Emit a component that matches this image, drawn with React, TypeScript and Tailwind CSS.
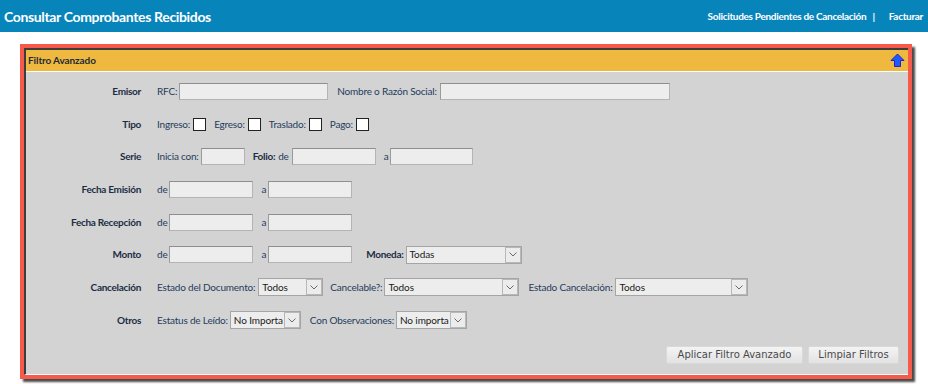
import React from "react";

const F = { fontFamily: "Lato, 'Liberation Sans', sans-serif" };

function Input({ w }: { w: string }) {
  return (
    <div
      className={`${w} h-[17px] bg-[#ededed] border border-[#b4b4b4] border-t-[#8e8e8e] border-l-[#9a9a9a]`}
    />
  );
}

function Check() {
  return <div className="w-[13px] h-[13px] bg-white border border-[#222]" />;
}

function Select({ w, value }: { w: string; value: string }) {
  return (
    <div
      className={`${w} h-[18px] bg-[#ededed] border border-[#a5a5a5] flex items-stretch`}
    >
      <div className="flex-1 flex items-center pl-[3px] text-[10px] tracking-[-0.1px] text-[#1a1a1a] overflow-hidden whitespace-nowrap">
        {value}
      </div>
      <div className="w-[16px] border border-[#b8b8b8] bg-[#ececec] flex items-center justify-center">
        <svg width="8" height="5" viewBox="0 0 8 5">
          <path d="M0.5 0.5 L4 4 L7.5 0.5" fill="none" stroke="#6a6a6a" strokeWidth="1" />
        </svg>
      </div>
    </div>
  );
}

function Row({ label, children }: { label: string; children: React.ReactNode }) {
  return (
    <div className="flex items-center h-[32.7px]">
      <div className="w-[115px] text-right font-bold text-[#1b2d45] text-[10px] tracking-[-0.3px]">
        {label}
      </div>
      <div className="ml-[16px] flex items-center text-[10px] tracking-[-0.2px] text-[#243c5c] whitespace-nowrap">
        {children}
      </div>
    </div>
  );
}

export default function App() {
  return (
    <div className="w-[928px] h-[384px] bg-white overflow-hidden" style={F}>
      <div className="h-[32px] bg-[#0785bb] flex items-center justify-between pl-[4px] pr-[5px]">
        <div className="text-white font-bold text-[14px] tracking-[-0.35px]">
          Consultar Comprobantes Recibidos
        </div>
        <div className="text-white font-bold text-[10px] tracking-[-0.3px] flex items-center">
          <span>Solicitudes Pendientes de Cancelación</span>
          <span className="ml-[6px]">|</span>
          <span className="ml-[14px]">Facturar</span>
        </div>
      </div>

      <div className="mt-[12px] ml-[20px] w-[892px] h-[335px] border-4 border-[#f65a4b] shadow-[3px_3px_2px_#4a4a4a]">
        <div className="h-full border-t-2 border-l-2 border-t-[#3c3c3c] border-l-[#3c3c3c] border-b border-b-white flex flex-col">
          <div className="h-[22px] bg-[#efb93f] flex items-center justify-between pl-[2px] pr-[3px] border-b border-white">
            <div className="text-[10px] font-bold text-[#1c2a3a] tracking-[-0.1px]">
              Filtro Avanzado
            </div>
            <svg width="15" height="15" viewBox="0 0 15 15">
              <path
                d="M7.5 1 L14 7.5 L10.5 7.5 L10.5 13.5 L4.5 13.5 L4.5 7.5 L1 7.5 Z"
                fill="#1a5cff"
                stroke="#2a1fc0"
                strokeWidth="1"
                strokeLinejoin="round"
              />
            </svg>
          </div>
          <div className="flex-1 bg-[#d3d3d3] pt-[3px] flex flex-col">
            <Row label="Emisor">
              <span>RFC:</span>
              <div className="ml-[2px]"><Input w="w-[149px]" /></div>
              <span className="ml-[9px]">Nombre o Razón Social:</span>
              <div className="ml-[3px]"><Input w="w-[230px]" /></div>
            </Row>
            <Row label="Tipo">
              <span>Ingreso:</span>
              <div className="ml-[3px]"><Check /></div>
              <span className="ml-[8px]">Egreso:</span>
              <div className="ml-[3px]"><Check /></div>
              <span className="ml-[8px]">Traslado:</span>
              <div className="ml-[3px]"><Check /></div>
              <span className="ml-[8px]">Pago:</span>
              <div className="ml-[3px]"><Check /></div>
            </Row>
            <Row label="Serie">
              <span>Inicia con:</span>
              <div className="ml-[2px]"><Input w="w-[44px]" /></div>
              <span className="ml-[8px] font-bold text-[#1b2d45] tracking-[-0.3px]">Folio:</span>
              <span className="ml-[3px]">de</span>
              <div className="ml-[3px]"><Input w="w-[84px]" /></div>
              <span className="ml-[8px]">a</span>
              <div className="ml-[2px]"><Input w="w-[83px]" /></div>
            </Row>
            <Row label="Fecha Emisión">
              <span>de</span>
              <div className="ml-[2px]"><Input w="w-[84px]" /></div>
              <span className="ml-[8px]">a</span>
              <div className="ml-[2px]"><Input w="w-[84px]" /></div>
            </Row>
            <Row label="Fecha Recepción">
              <span>de</span>
              <div className="ml-[2px]"><Input w="w-[84px]" /></div>
              <span className="ml-[8px]">a</span>
              <div className="ml-[2px]"><Input w="w-[84px]" /></div>
            </Row>
            <Row label="Monto">
              <span>de</span>
              <div className="ml-[2px]"><Input w="w-[84px]" /></div>
              <span className="ml-[8px]">a</span>
              <div className="ml-[2px]"><Input w="w-[84px]" /></div>
              <span className="ml-[14px] font-bold text-[#1b2d45] tracking-[-0.3px]">Moneda:</span>
              <div className="ml-[2px]"><Select w="w-[116px]" value="Todas" /></div>
            </Row>
            <Row label="Cancelación">
              <span>Estado del Documento:</span>
              <div className="ml-[3px]"><Select w="w-[65px]" value="Todos" /></div>
              <span className="ml-[7px]">Cancelable?:</span>
              <div className="ml-[2px]"><Select w="w-[135px]" value="Todos" /></div>
              <span className="ml-[9px]">Estado Cancelación:</span>
              <div className="ml-[3px]"><Select w="w-[133px]" value="Todos" /></div>
            </Row>
            <Row label="Otros">
              <span>Estatus de Leído:</span>
              <div className="ml-[2px]"><Select w="w-[71px]" value="No Importa" /></div>
              <span className="ml-[9px]">Con Observaciones:</span>
              <div className="ml-[2px]"><Select w="w-[71px]" value="No importa" /></div>
            </Row>
            <div className="mt-[9px] flex justify-end pr-[9px] gap-[5px]">
              <button
                className="w-[137px] h-[18px] rounded-[2px] border border-[#d9d9d9] bg-gradient-to-b from-[#f4f4f4] to-[#e2e2e2] text-[#4a4a4a]"
                style={{ fontFamily: "'DejaVu Sans', sans-serif", fontSize: "10px" }}
              >
                Aplicar Filtro Avanzado
              </button>
              <button
                className="w-[91px] h-[18px] rounded-[2px] border border-[#d9d9d9] bg-gradient-to-b from-[#f4f4f4] to-[#e2e2e2] text-[#4a4a4a]"
                style={{ fontFamily: "'DejaVu Sans', sans-serif", fontSize: "10px" }}
              >
                Limpiar Filtros
              </button>
            </div>
          </div>
        </div>
      </div>
    </div>
  );
}
